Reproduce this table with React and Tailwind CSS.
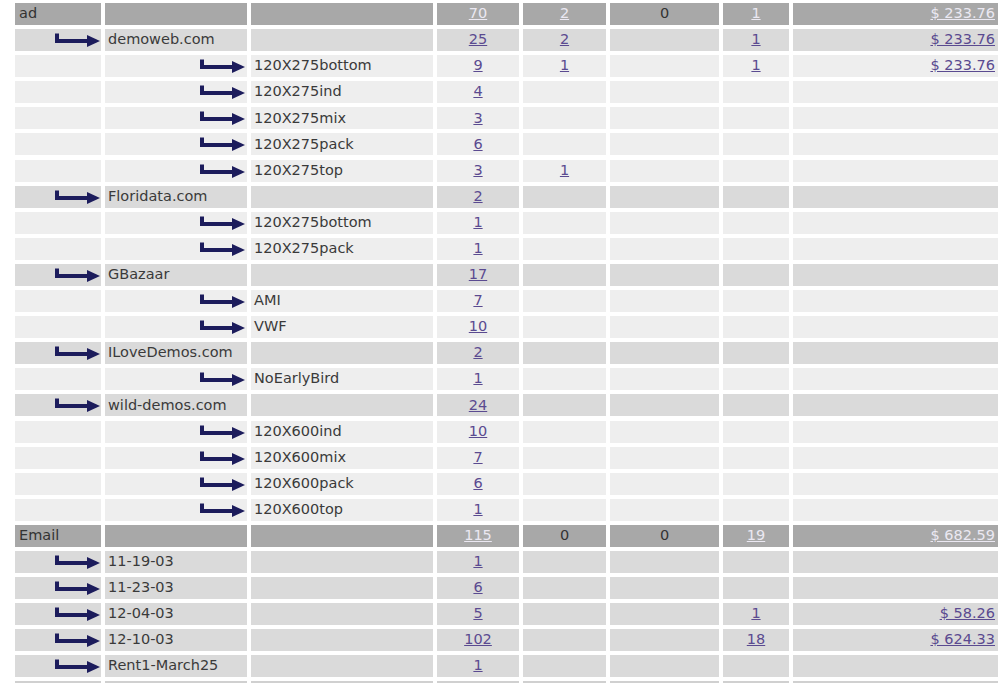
const rows = [
  { kind: 'group', label: 'ad', cells: ['70', '2', '0', '1', '$ 233.76'], links: [true, true, false, true, true] },
  { kind: 'l1', label: 'demoweb.com', cells: ['25', '2', '', '1', '$ 233.76'] },
  { kind: 'l2', label: '120X275bottom', cells: ['9', '1', '', '1', '$ 233.76'] },
  { kind: 'l2', label: '120X275ind', cells: ['4'] },
  { kind: 'l2', label: '120X275mix', cells: ['3'] },
  { kind: 'l2', label: '120X275pack', cells: ['6'] },
  { kind: 'l2', label: '120X275top', cells: ['3', '1'] },
  { kind: 'l1', label: 'Floridata.com', cells: ['2'] },
  { kind: 'l2', label: '120X275bottom', cells: ['1'] },
  { kind: 'l2', label: '120X275pack', cells: ['1'] },
  { kind: 'l1', label: 'GBazaar', cells: ['17'] },
  { kind: 'l2', label: 'AMI', cells: ['7'] },
  { kind: 'l2', label: 'VWF', cells: ['10'] },
  { kind: 'l1', label: 'ILoveDemos.com', cells: ['2'] },
  { kind: 'l2', label: 'NoEarlyBird', cells: ['1'] },
  { kind: 'l1', label: 'wild-demos.com', cells: ['24'] },
  { kind: 'l2', label: '120X600ind', cells: ['10'] },
  { kind: 'l2', label: '120X600mix', cells: ['7'] },
  { kind: 'l2', label: '120X600pack', cells: ['6'] },
  { kind: 'l2', label: '120X600top', cells: ['1'] },
  { kind: 'group', label: 'Email', cells: ['115', '0', '0', '19', '$ 682.59'], links: [true, false, false, true, true] },
  { kind: 'l1', label: '11-19-03', cells: ['1'] },
  { kind: 'l1', label: '11-23-03', cells: ['6'] },
  { kind: 'l1', label: '12-04-03', cells: ['5', '', '', '1', '$ 58.26'] },
  { kind: 'l1', label: '12-10-03', cells: ['102', '', '', '18', '$ 624.33'] },
  { kind: 'l1', label: 'Rent1-March25', cells: ['1'] },
]

const grid = 'grid grid-cols-[86px_142px_182px_82px_83px_109px_66px_205px] gap-x-[4px]'

const rowBg = {
  group: 'bg-[#a8a8a8]',
  l1: 'bg-[#dadada]',
  l2: 'bg-[#eeeeee]',
}

function Arrow() {
  return (
    <svg width="45" height="14" viewBox="0 0 45 14" className="shrink-0">
      <rect x="0" y="0.5" width="4" height="9" fill="#1c1c5c" />
      <rect x="0" y="6" width="34" height="4" fill="#1c1c5c" />
      <polygon points="32,2 45,8 32,14" fill="#1c1c5c" />
    </svg>
  )
}

function Value({ text, link, header }) {
  if (!text) return null
  if (!link) return <span className="text-[#333]">{text}</span>
  return (
    <a href="#" className={`underline ${header ? 'text-[#ebe8f2]' : 'text-[#5a4a90]'}`}>
      {text}
    </a>
  )
}

function Row({ row }) {
  const bg = rowBg[row.kind]
  const header = row.kind === 'group'
  const cell = `${bg} h-[22px] flex items-center`
  const vals = [0, 1, 2, 3, 4].map((i) => row.cells[i] || '')
  const links = row.links || [true, true, true, true, true]

  return (
    <div className={grid}>
      <div className={`${cell} ${header ? 'pl-[4px]' : 'justify-end pr-[1px]'}`}>
        {header ? <span className="text-[#333]">{row.label}</span> : row.kind === 'l1' ? <Arrow /> : null}
      </div>
      <div className={`${cell} ${row.kind === 'l2' ? 'justify-end pr-[2px]' : 'pl-[3px]'}`}>
        {row.kind === 'l1' && <span className="text-[#3a3a3a]">{row.label}</span>}
        {row.kind === 'l2' && <Arrow />}
      </div>
      <div className={`${cell} pl-[3px]`}>
        {row.kind === 'l2' && <span className="text-[#3a3a3a]">{row.label}</span>}
      </div>
      {vals.slice(0, 4).map((v, i) => (
        <div key={i} className={`${cell} justify-center`}>
          <Value text={v} link={links[i]} header={header} />
        </div>
      ))}
      <div className={`${cell} justify-end pr-[3px]`}>
        <Value text={vals[4]} link={links[4]} header={header} />
      </div>
    </div>
  )
}

export default function App() {
  return (
    <div className="w-[1000px] h-[689px] overflow-hidden bg-white pl-[15px] pt-[3px] text-[14.5px] font-['DejaVu_Sans',Verdana,sans-serif]">
      <div className="flex flex-col gap-y-[4.1px]">
        {rows.map((row, i) => (
          <Row key={i} row={row} />
        ))}
        {/* top edge of the next, cut-off row */}
        <div className={grid}>
          {[0, 1, 2, 3, 4, 5, 6, 7].map((i) => (
            <div key={i} className="h-[2px] bg-[#d0d0d0]" />
          ))}
        </div>
      </div>
    </div>
  )
}
